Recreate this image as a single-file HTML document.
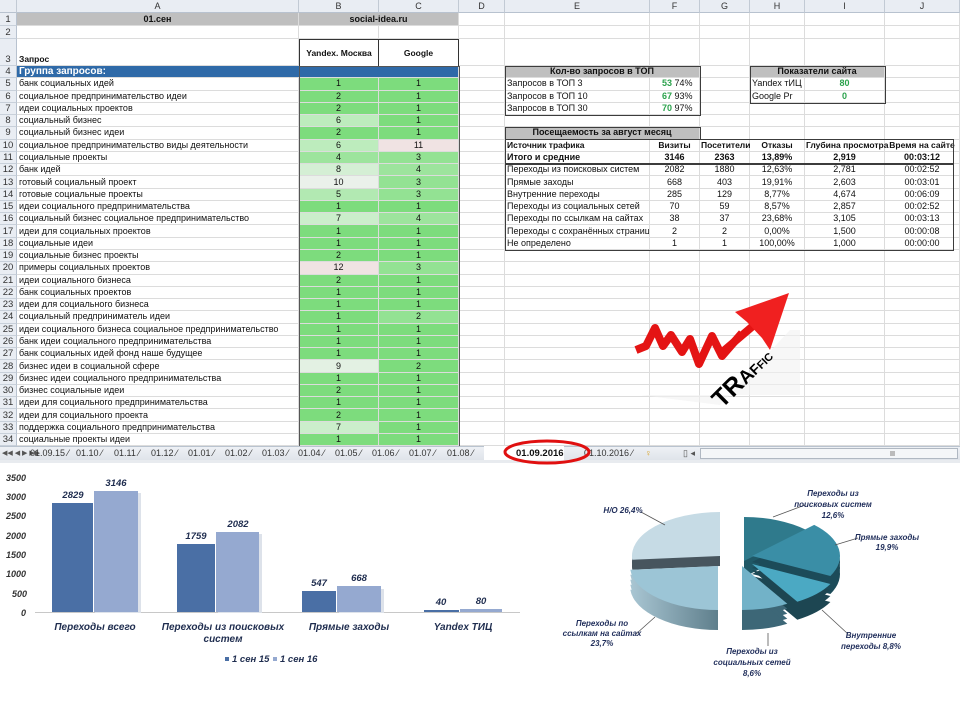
<!DOCTYPE html>
<html><head><meta charset="utf-8">
<style>
*{margin:0;padding:0;box-sizing:border-box}
body{width:960px;height:720px;background:#fff;position:relative;overflow:hidden;font-family:"Liberation Sans",sans-serif;}
table{position:absolute;left:0;top:0;border-collapse:separate;border-spacing:0;table-layout:fixed;width:960px;font-size:9px;color:#111}
td{border-right:1px solid #dcdcdc;border-bottom:1px solid #dcdcdc;padding:0 2px;white-space:nowrap;overflow:hidden;line-height:11px;vertical-align:middle}
td.n{background:#e9edf3;color:#333;text-align:center;border-right:1px solid #b8c2cf;border-bottom:1px solid #c8d0da;font-size:9.5px;padding:0}
tr.h td{background:#e9edf3;color:#333;text-align:center;border-right:1px solid #c2cad4;border-bottom:1px solid #b8c2cf;font-size:9px}
tr.r td{height:12.27px}
.c{text-align:center}
.g{background:#bfbfbf;font-weight:bold;text-align:center}
.k1{background:#7ddc7d}.k3{background:#93e293}.k4{background:#9de49d}.k5{background:#b2e9b2}.k6{background:#bdecbd}.k7{background:#cbeecb}.k8{background:#d4efd4}.k9{background:#e3f1e3}.k10{background:#eaf1ea}.k11{background:#f0e3e3}
.gr{color:#2ba24c;font-weight:bold}
.box{position:absolute;border:1px solid #3c3c3c}
.tabs{position:absolute;left:0;top:446px;width:960px;height:14px;background:linear-gradient(#eef1f5,#dfe4ea);border-top:1px solid #b9c3cf;font-size:9px;color:#333}
.tabs span{position:absolute;top:1px}
.ax{font:italic bold 9px "Liberation Sans",sans-serif;fill:#333}
.vl{font:italic bold 9.5px "Liberation Sans",sans-serif;fill:#1f2d4f}
.pl{font:italic bold 8px "Liberation Sans",sans-serif;fill:#1f2d5a}
tr.th td{font-size:8.5px;padding:0 1px;overflow:visible}
</style></head><body>
<table>
<colgroup><col style="width:17px"><col style="width:282px"><col style="width:80px"><col style="width:80px"><col style="width:46px"><col style="width:145px"><col style="width:50px"><col style="width:50px"><col style="width:55px"><col style="width:80px"><col style="width:75px"></colgroup>
<tr class="h" style="height:13px"><td></td><td>A</td><td>B</td><td>C</td><td>D</td><td>E</td><td>F</td><td>G</td><td>H</td><td>I</td><td>J</td></tr>
<tr style="height:13px"><td class="n">1</td><td class="g">01.сен</td><td class="g" colspan="2">social-idea.ru</td><td></td><td></td><td></td><td></td><td></td><td></td><td></td></tr>
<tr style="height:13px"><td class="n">2</td><td></td><td></td><td></td><td></td><td></td><td></td><td></td><td></td><td></td><td></td></tr>
<tr style="height:27px"><td class="n" style="vertical-align:bottom">3</td><td style="vertical-align:bottom;font-weight:bold;font-size:8.5px">Запрос</td><td class="c" style="font-weight:bold;font-size:8.5px;border:1px solid #333;border-bottom:none">Yandex. Москва</td><td class="c" style="font-weight:bold;font-size:8.5px;border:1px solid #333;border-left:none;border-bottom:none">Google</td><td></td><td></td><td></td><td></td><td></td><td></td><td></td></tr>
<tr class="r"><td class="n">4</td><td colspan="3" style="background:#2f6aa8;color:#fff;font-weight:bold;font-size:10px">Группа запросов:</td><td></td><td class="g" colspan="2">Кол-во запросов в ТОП</td><td></td><td class="g" colspan="2">Показатели сайта</td><td></td></tr>
<tr class="r"><td class="n">5</td><td>банк социальных идей</td><td class="c k1">1</td><td class="c k1">1</td><td></td><td>Запросов в ТОП 3</td><td style="padding-left:12px"><span class="gr">53</span> 74%</td><td></td><td>Yandex тИЦ</td><td class="c gr">80</td><td></td></tr>
<tr class="r"><td class="n">6</td><td>социальное предпринимательство идеи</td><td class="c k1">2</td><td class="c k1">1</td><td></td><td>Запросов в ТОП 10</td><td style="padding-left:12px"><span class="gr">67</span> 93%</td><td></td><td>Google Pr</td><td class="c gr">0</td><td></td></tr>
<tr class="r"><td class="n">7</td><td>идеи социальных проектов</td><td class="c k1">2</td><td class="c k1">1</td><td></td><td>Запросов в ТОП 30</td><td style="padding-left:12px"><span class="gr">70</span> 97%</td><td></td><td></td><td></td><td></td></tr>
<tr class="r"><td class="n">8</td><td>социальный бизнес</td><td class="c k6">6</td><td class="c k1">1</td><td></td><td></td><td></td><td></td><td></td><td></td><td></td></tr>
<tr class="r"><td class="n">9</td><td>социальный бизнес идеи</td><td class="c k1">2</td><td class="c k1">1</td><td></td><td class="g" colspan="2">Посещаемость за август месяц</td><td></td><td></td><td></td><td></td></tr>
<tr class="r th" style="font-weight:bold"><td class="n" style="font-weight:normal;font-size:9.5px">10</td><td style="font-weight:normal;font-size:9px;padding:0 2px;overflow:hidden">социальное предпринимательство виды деятельности</td><td class="c k6" style="font-weight:normal;font-size:9px">6</td><td class="c k11" style="font-weight:normal;font-size:9px">11</td><td></td><td style="padding-left:2px">Источник трафика</td><td class="c">Визиты</td><td class="c">Посетители</td><td class="c">Отказы</td><td class="c">Глубина просмотра</td><td class="c">Время на сайте</td></tr>
<tr class="r" style="font-weight:bold"><td class="n" style="font-weight:normal">11</td><td style="font-weight:normal">социальные проекты</td><td class="c k4" style="font-weight:normal">4</td><td class="c k3" style="font-weight:normal">3</td><td></td><td>Итого и средние</td><td class="c">3146</td><td class="c">2363</td><td class="c">13,89%</td><td class="c">2,919</td><td class="c">00:03:12</td></tr>
<tr class="r"><td class="n">12</td><td>банк идей</td><td class="c k8">8</td><td class="c k4">4</td><td></td><td>Переходы из поисковых систем</td><td class="c">2082</td><td class="c">1880</td><td class="c">12,63%</td><td class="c">2,781</td><td class="c">00:02:52</td></tr>
<tr class="r"><td class="n">13</td><td>готовый социальный проект</td><td class="c k10">10</td><td class="c k3">3</td><td></td><td>Прямые заходы</td><td class="c">668</td><td class="c">403</td><td class="c">19,91%</td><td class="c">2,603</td><td class="c">00:03:01</td></tr>
<tr class="r"><td class="n">14</td><td>готовые социальные проекты</td><td class="c k5">5</td><td class="c k3">3</td><td></td><td>Внутренние переходы</td><td class="c">285</td><td class="c">129</td><td class="c">8,77%</td><td class="c">4,674</td><td class="c">00:06:09</td></tr>
<tr class="r"><td class="n">15</td><td>идеи социального предпринимательства</td><td class="c k1">1</td><td class="c k1">1</td><td></td><td>Переходы из социальных сетей</td><td class="c">70</td><td class="c">59</td><td class="c">8,57%</td><td class="c">2,857</td><td class="c">00:02:52</td></tr>
<tr class="r"><td class="n">16</td><td>социальный бизнес социальное предпринимательство</td><td class="c k7">7</td><td class="c k4">4</td><td></td><td>Переходы по ссылкам на сайтах</td><td class="c">38</td><td class="c">37</td><td class="c">23,68%</td><td class="c">3,105</td><td class="c">00:03:13</td></tr>
<tr class="r"><td class="n">17</td><td>идеи для социальных проектов</td><td class="c k1">1</td><td class="c k1">1</td><td></td><td>Переходы с сохранённых страниц</td><td class="c">2</td><td class="c">2</td><td class="c">0,00%</td><td class="c">1,500</td><td class="c">00:00:08</td></tr>
<tr class="r"><td class="n">18</td><td>социальные идеи</td><td class="c k1">1</td><td class="c k1">1</td><td></td><td>Не определено</td><td class="c">1</td><td class="c">1</td><td class="c">100,00%</td><td class="c">1,000</td><td class="c">00:00:00</td></tr>
<tr class="r"><td class="n">19</td><td>социальные бизнес проекты</td><td class="c k1">2</td><td class="c k1">1</td><td></td><td></td><td></td><td></td><td></td><td></td><td></td></tr>
<tr class="r"><td class="n">20</td><td>примеры социальных проектов</td><td class="c k11">12</td><td class="c k3">3</td><td></td><td></td><td></td><td></td><td></td><td></td><td></td></tr>
<tr class="r"><td class="n">21</td><td>идеи социального бизнеса</td><td class="c k1">2</td><td class="c k1">1</td><td></td><td></td><td></td><td></td><td></td><td></td><td></td></tr>
<tr class="r"><td class="n">22</td><td>банк социальных проектов</td><td class="c k1">1</td><td class="c k1">1</td><td></td><td></td><td></td><td></td><td></td><td></td><td></td></tr>
<tr class="r"><td class="n">23</td><td>идеи для социального бизнеса</td><td class="c k1">1</td><td class="c k1">1</td><td></td><td></td><td></td><td></td><td></td><td></td><td></td></tr>
<tr class="r"><td class="n">24</td><td>социальный предприниматель идеи</td><td class="c k1">1</td><td class="c k3">2</td><td></td><td></td><td></td><td></td><td></td><td></td><td></td></tr>
<tr class="r"><td class="n">25</td><td>идеи социального бизнеса социальное предпринимательство</td><td class="c k1">1</td><td class="c k1">1</td><td></td><td></td><td></td><td></td><td></td><td></td><td></td></tr>
<tr class="r"><td class="n">26</td><td>банк идеи социального предпринимательства</td><td class="c k1">1</td><td class="c k1">1</td><td></td><td></td><td></td><td></td><td></td><td></td><td></td></tr>
<tr class="r"><td class="n">27</td><td>банк социальных идей фонд наше будущее</td><td class="c k1">1</td><td class="c k1">1</td><td></td><td></td><td></td><td></td><td></td><td></td><td></td></tr>
<tr class="r"><td class="n">28</td><td>бизнес идеи в социальной сфере</td><td class="c k9">9</td><td class="c k1">2</td><td></td><td></td><td></td><td></td><td></td><td></td><td></td></tr>
<tr class="r"><td class="n">29</td><td>бизнес идеи социального предпринимательства</td><td class="c k1">1</td><td class="c k1">1</td><td></td><td></td><td></td><td></td><td></td><td></td><td></td></tr>
<tr class="r"><td class="n">30</td><td>бизнес социальные идеи</td><td class="c k1">2</td><td class="c k1">1</td><td></td><td></td><td></td><td></td><td></td><td></td><td></td></tr>
<tr class="r"><td class="n">31</td><td>идеи для социального предпринимательства</td><td class="c k1">1</td><td class="c k1">1</td><td></td><td></td><td></td><td></td><td></td><td></td><td></td></tr>
<tr class="r"><td class="n">32</td><td>идеи для социального проекта</td><td class="c k1">2</td><td class="c k1">1</td><td></td><td></td><td></td><td></td><td></td><td></td><td></td></tr>
<tr class="r"><td class="n">33</td><td>поддержка социального предпринимательства</td><td class="c k7">7</td><td class="c k1">1</td><td></td><td></td><td></td><td></td><td></td><td></td><td></td></tr>
<tr class="r"><td class="n">34</td><td>социальные проекты идеи</td><td class="c k1">1</td><td class="c k1">1</td><td></td><td></td><td></td><td></td><td></td><td></td><td></td></tr>
</table>

<div class="box" style="left:299px;top:66px;width:161px;height:381px;border-color:#555"></div>
<div class="box" style="left:505px;top:66px;width:196px;height:50px"></div>
<div class="box" style="left:750px;top:66px;width:136px;height:38px"></div>
<div class="box" style="left:505px;top:127px;width:196px;height:13px"></div>
<div class="box" style="left:505px;top:139px;width:449px;height:112px"></div>
<div style="position:absolute;left:505px;top:163px;width:449px;height:2px;background:#3c3c3c"></div>

<svg style="position:absolute;left:625px;top:280px" width="185" height="135" viewBox="625 280 185 135">
<polygon points="640,395 800,395 800,330 790,330 720,405" fill="#f1f1f1" opacity="0.6"/>
<polyline points="636,350 646,346 655,328 663,346 671,335 682,352 690,339 699,364 712,336 722,356 742,333" fill="none" stroke="#e41414" stroke-width="8" stroke-linejoin="round"/>
<line x1="720" y1="354" x2="760" y2="320" stroke="#e41414" stroke-width="8"/>
<polygon points="789,293 735,312 747,322 762,338 770,350" fill="#f02020"/>
<text x="0" y="0" transform="translate(722,409) rotate(-45)" font-family="Liberation Sans" font-weight="bold" font-size="25" fill="#000">TR<tspan font-size="19">A</tspan><tspan font-size="14">F</tspan><tspan font-size="11">FIC</tspan></text>
</svg>

<div class="tabs">
<span style="left:2px;color:#555;font-size:7px;top:2px">◀◀ ◀ ▶ ▶▶</span>
<span style="left:30px">01.09.15 ⁄</span><span style="left:76px">01.10 ⁄</span><span style="left:114px">01.11 ⁄</span><span style="left:151px">01.12 ⁄</span><span style="left:188px">01.01 ⁄</span><span style="left:225px">01.02 ⁄</span><span style="left:262px">01.03 ⁄</span><span style="left:298px">01.04 ⁄</span><span style="left:335px">01.05 ⁄</span><span style="left:372px">01.06 ⁄</span><span style="left:409px">01.07 ⁄</span><span style="left:447px">01.08 ⁄</span>
<span style="left:484px;top:-1px;width:80px;height:14px;background:#fff"></span>
<span style="left:516px;font-weight:bold;color:#111;font-size:9.5px">01.09.2016</span>
<span style="left:584px">01.10.2016 ⁄</span>
<span style="left:645px;color:#d9a020">♀</span>
<span style="left:683px;color:#555">▯ ◂</span>
<span style="left:700px;top:1px;width:258px;height:11px;border:1px solid #b0b8c2;background:#f4f6f8"></span>
<span style="left:890px;top:4px;width:5px;height:5px;background:#bbb"></span>
</div>
<div style="position:absolute;left:0;top:460px;width:960px;height:3px;background:#e8ebef"></div>

<svg style="position:absolute;left:502px;top:436px" width="92" height="30"><ellipse cx="45" cy="16" rx="42" ry="11" fill="none" stroke="#e01010" stroke-width="3"/></svg>

<svg style="position:absolute;left:0;top:463px" width="560" height="257" viewBox="0 463 560 257">
<text class="ax" x="6" y="481">3500</text><text class="ax" x="6" y="500">3000</text><text class="ax" x="6" y="519">2500</text><text class="ax" x="6" y="539">2000</text><text class="ax" x="6" y="558">1500</text><text class="ax" x="6" y="577">1000</text><text class="ax" x="12" y="597">500</text><text class="ax" x="21" y="616">0</text>
<line x1="35" y1="612.5" x2="520" y2="612.5" stroke="#c8c8c8"/>
<g fill="#dde2ea"><rect x="95" y="493" width="46" height="120"/><rect x="218" y="534" width="44" height="79"/><rect x="339" y="589" width="45" height="24"/></g>
<rect x="52" y="503" width="41" height="109" fill="#4a6fa5"/><rect x="94" y="491" width="44" height="121" fill="#95a9d0"/>
<rect x="177" y="544" width="38" height="68" fill="#4a6fa5"/><rect x="216" y="532" width="43" height="80" fill="#95a9d0"/>
<rect x="302" y="591" width="34" height="21" fill="#4a6fa5"/><rect x="337" y="586" width="44" height="26" fill="#95a9d0"/>
<rect x="424" y="610" width="35" height="2" fill="#4a6fa5"/><rect x="460" y="609" width="42" height="3" fill="#95a9d0"/>
<g class="vl" text-anchor="middle"><text x="73" y="498">2829</text><text x="116" y="486">3146</text><text x="196" y="539">1759</text><text x="238" y="527">2082</text><text x="319" y="586">547</text><text x="359" y="581">668</text><text x="441" y="605">40</text><text x="481" y="604">80</text></g>
<g class="vl" text-anchor="middle" style="font-size:10px;fill:#1f2d4f"><text x="95" y="630">Переходы всего</text><text x="223" y="630">Переходы из поисковых</text><text x="223" y="642">систем</text><text x="349" y="630">Прямые заходы</text><text x="463" y="630">Yandex ТИЦ</text></g>
<rect x="225" y="657" width="4" height="4" fill="#4a6fa5"/><text class="vl" x="232" y="662">1 сен 15</text>
<rect x="273" y="657" width="4" height="4" fill="#95a9d0"/><text class="vl" x="280" y="662">1 сен 16</text>
</svg>

<svg style="position:absolute;left:560px;top:463px" width="400" height="257" viewBox="560 463 400 257">
<defs><linearGradient id="lg" x1="0" x2="1"><stop offset="0" stop-color="#a9c6d3"/><stop offset="1" stop-color="#5f7f8c"/></linearGradient></defs>
<g fill="#47555e"><path d="M720,556 L632.3,559.8 A88,44 0 0 1 720,512 Z" transform="translate(0,6)"/><path d="M720,556 L632.3,559.8 A88,44 0 0 1 720,512 Z" transform="translate(0,10)"/></g>
<path d="M720,556 L632.3,559.8 A88,44 0 0 1 720,512 Z" fill="#c6dbe5"/>
<g fill="#1f5866"><path d="M744,561 L744,517 A88,44 0 0 1 806.2,529.9 Z" transform="translate(0,8)"/><path d="M744,561 L744,517 A88,44 0 0 1 806.2,529.9 Z" transform="translate(0,16)"/></g>
<path d="M744,561 L744,517 A88,44 0 0 1 806.2,529.9 Z" fill="#2f7a8c"/>
<g fill="#1c4b59"><path d="M752,556 L814.2,524.9 A88,44 0 0 1 830.4,576 Z" transform="translate(0,6)"/><path d="M752,556 L814.2,524.9 A88,44 0 0 1 830.4,576 Z" transform="translate(0,12)"/><path d="M752,556 L814.2,524.9 A88,44 0 0 1 830.4,576 Z" transform="translate(0,18)"/></g>
<path d="M752,556 L814.2,524.9 A88,44 0 0 1 830.4,576 Z" fill="#3a8ea6"/>
<g fill="#1d4652"><path d="M752,564 L830.4,584 A88,44 0 0 1 797.3,601.7 Z" transform="translate(0,6)"/><path d="M752,564 L830.4,584 A88,44 0 0 1 797.3,601.7 Z" transform="translate(0,12)"/><path d="M752,564 L830.4,584 A88,44 0 0 1 797.3,601.7 Z" transform="translate(0,18)"/></g>
<path d="M752,564 L830.4,584 A88,44 0 0 1 797.3,601.7 Z" fill="#4ba9c3"/>
<g fill="url(#lg)"><path d="M718,566 L718,610 A88,44 0 0 1 630.3,569.8 Z" transform="translate(0,5)"/><path d="M718,566 L718,610 A88,44 0 0 1 630.3,569.8 Z" transform="translate(0,10)"/><path d="M718,566 L718,610 A88,44 0 0 1 630.3,569.8 Z" transform="translate(0,15)"/><path d="M718,566 L718,610 A88,44 0 0 1 630.3,569.8 Z" transform="translate(0,20)"/></g>
<path d="M718,566 L718,610 A88,44 0 0 1 630.3,569.8 Z" fill="#9cc5d6"/>
<g fill="#3d6777"><path d="M742,566 L787.3,603.7 A88,44 0 0 1 742,610 Z" transform="translate(0,5)"/><path d="M742,566 L787.3,603.7 A88,44 0 0 1 742,610 Z" transform="translate(0,10)"/><path d="M742,566 L787.3,603.7 A88,44 0 0 1 742,610 Z" transform="translate(0,15)"/><path d="M742,566 L787.3,603.7 A88,44 0 0 1 742,610 Z" transform="translate(0,20)"/></g>
<path d="M742,566 L787.3,603.7 A88,44 0 0 1 742,610 Z" fill="#72b2c8"/>
<g stroke="#555" stroke-width="0.8" fill="none"><path d="M773,517 L805,505"/><path d="M835,545 L858,538"/><path d="M822,610 L848,634"/><path d="M768,633 L768,646"/><path d="M636,634 L655,617"/><path d="M641,512 L665,525"/></g>
<g class="pl" text-anchor="middle"><text x="833" y="496">Переходы из</text><text x="833" y="507">поисковых систем</text><text x="833" y="518">12,6%</text><text x="887" y="540">Прямые заходы</text><text x="887" y="550">19,9%</text><text x="871" y="638">Внутренние</text><text x="871" y="649">переходы 8,8%</text><text x="752" y="654">Переходы из</text><text x="752" y="665">социальных сетей</text><text x="752" y="676">8,6%</text><text x="602" y="626">Переходы по</text><text x="602" y="636">ссылкам на сайтах</text><text x="602" y="646">23,7%</text><text x="623" y="513">Н/О 26,4%</text></g>
</svg>
</body></html>
